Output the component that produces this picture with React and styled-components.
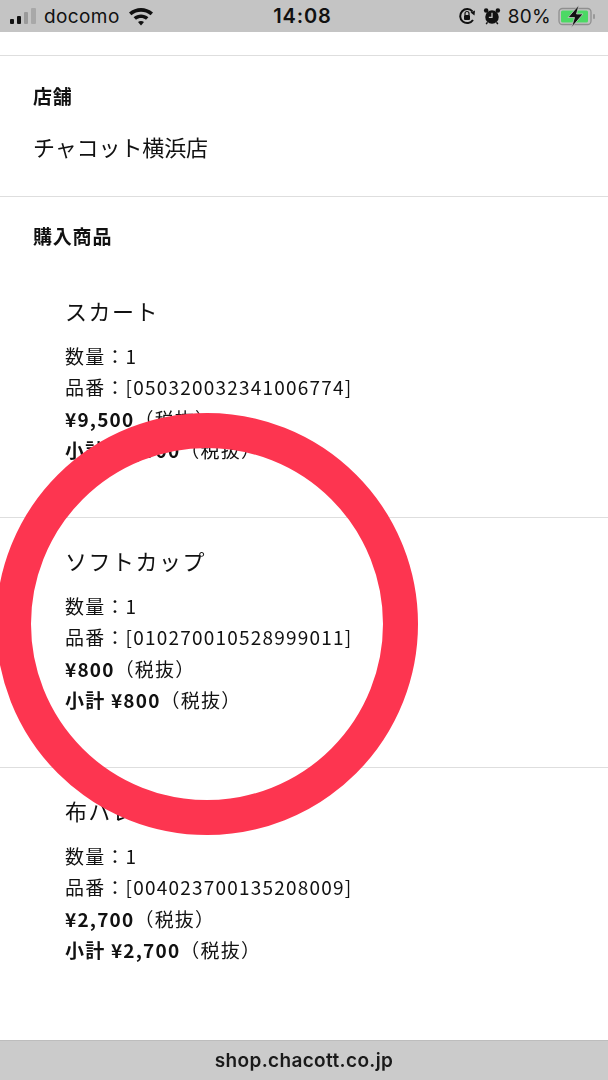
import React from "react";
import styled, { createGlobalStyle } from "styled-components";

const Global = createGlobalStyle`
  html, body { margin: 0; padding: 0; background: #fff; }
  body { font-family: "Noto Sans CJK JP", "Noto Sans", sans-serif; color: #111; }
`;

const Page = styled.div`
  position: relative;
  width: 608px;
  height: 1080px;
  overflow: hidden;
  display: flex;
  flex-direction: column;
  filter: blur(0.35px);
`;

const StatusBar = styled.div`
  height: 32px;
  flex: none;
  background: #c4c4c4;
  display: grid;
  grid-template-columns: 1fr auto 1fr;
  align-items: center;
  padding: 0 10px;
  font-family: "Inter", "Liberation Sans", sans-serif;
  font-size: 19px;
  color: #111;
`;

const StatusLeft = styled.div`
  display: flex;
  align-items: center;
  gap: 6px;
  letter-spacing: 0.4px;
`;

const StatusRight = styled.div`
  display: flex;
  align-items: center;
  justify-content: flex-end;
  gap: 7px;
  padding-right: 2px;
  letter-spacing: 0.3px;
`;

const Clock = styled.div`
  font-weight: 600;
  font-size: 20px;
  letter-spacing: 0.9px;
  margin-left: -3px;
`;

const Content = styled.div`
  flex: 1;
  padding-top: 23px;
`;

const Section = styled.section`
  border-top: 1px solid #dedede;
  padding: ${(p) => p.$pad};
  height: ${(p) => p.$h}px;
  box-sizing: border-box;
`;

const Label = styled.h3`
  margin: 0;
  font-size: 19px;
  line-height: 26px;
  font-weight: 700;
  letter-spacing: 0.8px;
`;

const Store = styled.p`
  margin: 22px 0 0;
  font-size: 22px;
  line-height: 30px;
  font-weight: 400;
  letter-spacing: -0.1px;
`;

const Product = styled.div`
  padding-left: 32px;
  padding-top: ${(p) => p.$top}px;
  box-sizing: border-box;
`;

const ProductName = styled.div`
  font-size: 22px;
  line-height: 30px;
  letter-spacing: 1.5px;
  margin-bottom: 15px;
`;

const Line = styled.div`
  font-size: 19px;
  line-height: 31.3px;
  letter-spacing: 1.2px;
  white-space: nowrap;
`;

const Strong = styled.strong`
  font-weight: 700;
`;

const Ring = styled.div`
  position: absolute;
  left: -4px;
  top: 413px;
  width: 422px;
  height: 422px;
  box-sizing: border-box;
  border-radius: 50%;
  border: 35px solid #fd3550;
`;

const AddressBar = styled.div`
  height: 40px;
  flex: none;
  background: #cbcbcb;
  border-top: 1px solid #bdbdbd;
  box-sizing: border-box;
  display: flex;
  align-items: center;
  justify-content: center;
  font-family: "Inter", "Liberation Sans", sans-serif;
  font-weight: 600;
  font-size: 19px;
  letter-spacing: 0.35px;
  color: #1a1a1a;
`;

const Signal = () => (
  <svg width="28" height="20" viewBox="0 0 28 20">
    <rect x="0" y="13" width="4" height="5" rx="1" fill="#111" />
    <rect x="7" y="10" width="4" height="8" rx="1" fill="#111" />
    <rect x="14" y="6" width="4" height="12" rx="1" fill="#9a9a9a" />
    <rect x="21" y="2" width="5" height="16" rx="1" fill="#a8a8a8" />
  </svg>
);

const Wifi = () => (
  <svg width="26" height="20" viewBox="0 0 26 20" style={{ marginLeft: 2 }}>
    <path d="M1 6.5C8 .5 18 .5 25 6.5L22.6 9.2C17 4.6 9 4.6 3.4 9.2Z" fill="#111" />
    <path d="M5.6 11.2C10 7.6 16 7.6 20.4 11.2L18 13.8C15 11.4 11 11.4 8 13.8Z" fill="#111" />
    <path d="M10 16C11.800 14.600 14.200 14.600 16 16L13 19.500Z" fill="#111" />
  </svg>
);

const Lock = () => (
  <svg width="18" height="18" viewBox="0 0 18 18">
    <path d="M14.500 4.500A7 7 0 1 0 15 13" fill="none" stroke="#111" strokeWidth="2" />
    <path d="M12.500 5.500L17 3.500L16.500 8.500Z" fill="#111" />
    <rect x="6" y="8" width="6" height="5" rx="1" fill="#111" />
    <path d="M7 8V6.500a2 2 0 0 1 4 0V8" fill="none" stroke="#111" strokeWidth="1.200" />
  </svg>
);

const Alarm = () => (
  <svg width="18" height="20" viewBox="0 0 20 20">
    <circle cx="10" cy="11" r="7.500" fill="#111" />
    <circle cx="3.500" cy="3.800" r="2.500" fill="#111" />
    <circle cx="16.500" cy="3.800" r="2.500" fill="#111" />
    <path d="M10 6.500V11.500H6.500" fill="none" stroke="#c4c4c4" strokeWidth="1.400" />
    <path d="M5 17L3.500 19M15 17L16.500 19" stroke="#111" strokeWidth="1.600" />
  </svg>
);

const Battery = () => (
  <svg width="38" height="24" viewBox="0 0 38 24">
    <rect x="1" y="4.500" width="32" height="16" rx="3.500" fill="none" stroke="#8f8f8f" strokeWidth="1.300" />
    <rect x="3" y="6.500" width="27" height="12" rx="1.500" fill="#4cd964" />
    <rect x="35" y="10" width="2" height="5" rx="1" fill="#999" />
    <path d="M21 1L10 13.500H16.500L13.500 23.500L25 10H18.500Z" fill="#111" stroke="#c4c4c4" strokeWidth="0.800" />
  </svg>
);

const products = [
  { name: "スカート", code: "050320032341006774", price: "¥9,500", sub: "小計 ¥9,500" },
  { name: "ソフトカップ", code: "010270010528999011", price: "¥800", sub: "小計 ¥800" },
  { name: "布バレエシューズ", code: "004023700135208009", price: "¥2,700", sub: "小計 ¥2,700" },
];

const Item = ({ p, top }) => (
  <Product $top={top}>
    <ProductName>{p.name}</ProductName>
    <Line>数量：1</Line>
    <Line>品番：[{p.code}]</Line>
    <Line><Strong>{p.price}</Strong>（税抜）</Line>
    <Line><Strong>{p.sub}</Strong>（税抜）</Line>
  </Product>
);

export default function App() {
  return (
    <Page>
      <Global />
      <StatusBar>
        <StatusLeft>
          <Signal />
          <span>docomo</span>
          <Wifi />
        </StatusLeft>
        <Clock>14:08</Clock>
        <StatusRight>
          <Lock />
          <Alarm />
          <span>80%</span>
          <Battery />
        </StatusRight>
      </StatusBar>
      <Content>
        <Section $pad="27px 33px 0" $h={141}>
          <Label>店舗</Label>
          <Store>チャコット横浜店</Store>
        </Section>
        <Section $pad="26px 33px 0" $h={321}>
          <Label>購入商品</Label>
          <Item p={products[0]} top={46} />
        </Section>
        {products.slice(1).map((p) => (
          <Section key={p.code} $pad="0 33px" $h={250}>
            <Item p={p} top={27} />
          </Section>
        ))}
      </Content>
      <AddressBar>shop.chacott.co.jp</AddressBar>
      <Ring />
    </Page>
  );
}
